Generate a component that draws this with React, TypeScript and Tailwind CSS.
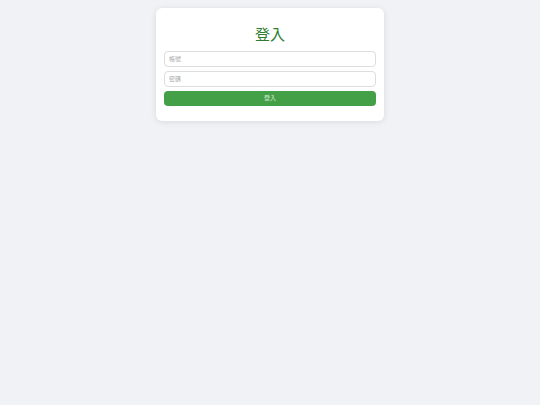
import React from "react";

const App: React.FC = () => {
  return (
    <div
      className="min-h-[405px] bg-[#f0f2f5] pt-[8px]"
      style={{ fontFamily: '"Noto Sans", "Noto Sans CJK TC", sans-serif' }}
    >
      <div className="mx-auto w-[228px] rounded-[6px] bg-white px-[8px] pt-[16px] pb-[15px] shadow-[0_1px_6px_rgba(0,0,0,0.1)]">
        <h1 className="mb-[7px] text-center text-[15px] leading-[20px] font-normal text-[#2e7d32]">
          登入
        </h1>
        <div className="flex flex-col gap-[4px]">
          <input
            type="text"
            placeholder="帳號"
            className="h-[16px] w-full rounded-[4px] border border-[#dddddd] px-[4px] text-[6px] outline-none placeholder:text-[#aaaaaa]"
          />
          <input
            type="password"
            placeholder="密碼"
            className="h-[16px] w-full rounded-[4px] border border-[#dddddd] px-[4px] text-[6px] outline-none placeholder:text-[#aaaaaa]"
          />
          <button className="h-[15px] w-full rounded-[4px] bg-[#43a047] text-[6px] text-white/80">
            登入
          </button>
        </div>
      </div>
    </div>
  );
};

export default App;
